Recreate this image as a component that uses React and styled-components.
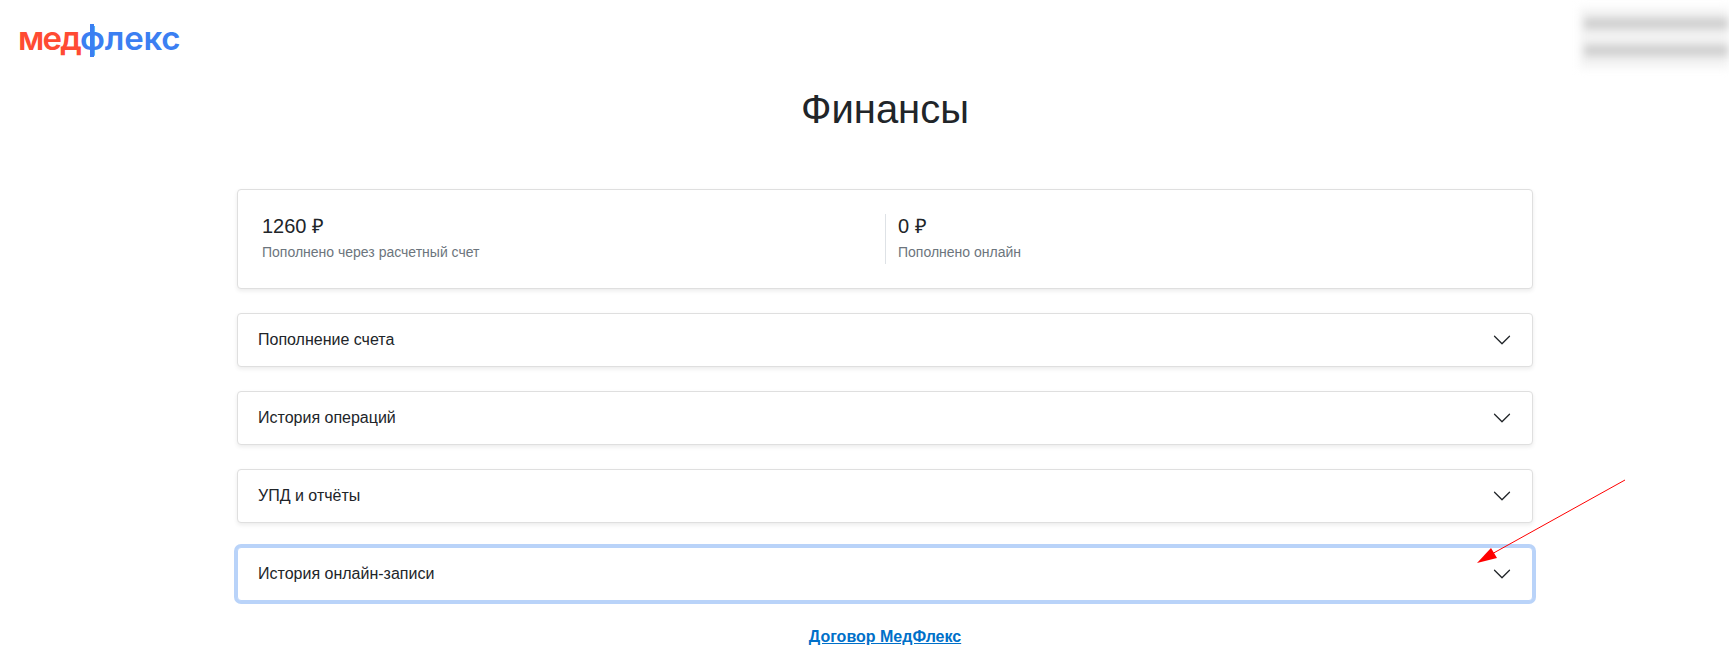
import React from 'react'
import styled, { createGlobalStyle } from 'styled-components'

const sections = [
  { title: 'Пополнение счета' },
  { title: 'История операций' },
  { title: 'УПД и отчёты' },
  { title: 'История онлайн-записи', focused: true },
]

const App = () => (
  <Page>
    <GlobalStyle />
    <Header>
      <Logo>
        <LogoPart $color="#ff4b33" $spacing="-1.8px">мед</LogoPart>
        <LogoPart $color="#3b7ff2" $spacing="-0.2px">
          <LogoStem>ф</LogoStem>лекс
        </LogoPart>
      </Logo>
      <Profile>
        <BlurBar />
        <BlurBar />
      </Profile>
    </Header>
    <Main>
      <Title>Финансы</Title>
      <StatsCard>
        <Stat>
          <Amount>1260 ₽</Amount>
          <StatLabel>Пополнено через расчетный счет</StatLabel>
        </Stat>
        <Stat $divided>
          <Amount>0 ₽</Amount>
          <StatLabel>Пополнено онлайн</StatLabel>
        </Stat>
      </StatsCard>
      <Sections>
        {sections.map(section => (
          <Section key={section.title} $focused={section.focused}>
            {section.title}
            <Chevron viewBox="0 0 16 16" fill="#212529">
              <path
                fillRule="evenodd"
                d="M1.646 4.646a.5.5 0 0 1 .708 0L8 10.293l5.646-5.647a.5.5 0 0 1 .708.708l-6 6a.5.5 0 0 1-.708 0l-6-6a.5.5 0 0 1 0-.708z"
              />
            </Chevron>
          </Section>
        ))}
      </Sections>
      <ContractLink href="#">Договор МедФлекс</ContractLink>
    </Main>
    <Annotation viewBox="0 0 1729 654">
      <line x1="1625" y1="480" x2="1490" y2="555" stroke="#ff0000" strokeWidth="1" />
      <polygon points="1477,563 1491,548 1497,558" fill="#ff0000" />
    </Annotation>
  </Page>
)

const GlobalStyle = createGlobalStyle`
  html, body {
    margin: 0;
    background: #fff;
    overflow: hidden;
  }
  body {
    font-family: "Liberation Sans", Arial, sans-serif;
    font-size: 16px;
    line-height: 24px;
    color: #212529;
  }
`

const Page = styled.div`
  position: relative;
  width: 1729px;
  height: 654px;
  overflow: hidden;
`

const Header = styled.header`
  display: flex;
  justify-content: space-between;
  height: 68px;
`

const Logo = styled.div`
  display: flex;
  align-items: baseline;
  margin: 18px 0 0 18px;
  height: 40px;
  font-family: Inter, sans-serif;
  font-size: 33px;
  line-height: 40px;
  font-weight: 600;
`

const LogoPart = styled.span`
  color: ${props => props.$color};
  letter-spacing: ${props => props.$spacing};
`

const LogoStem = styled.span`
  position: relative;
  &::after {
    content: '';
    position: absolute;
    left: 50%;
    top: 6px;
    bottom: 1px;
    width: 4px;
    margin-left: -2px;
    background: currentColor;
  }
`

const Profile = styled.div`
  display: flex;
  flex-direction: column;
  gap: 16px;
  width: 149px;
  height: 60px;
  margin-top: 8px;
  padding: 10px 0 0 4px;
  box-sizing: border-box;
  background: #f3f3f3;
  filter: blur(4px);
`

const BlurBar = styled.div`
  height: 11px;
  background: #cecece;
`

const Main = styled.main`
  width: 1296px;
  margin-left: 237px;
  display: flex;
  flex-direction: column;
  align-items: center;
`

const Title = styled.h1`
  margin: 16px 0 0;
  font-size: 40px;
  line-height: 50px;
  font-weight: 400;
`

const StatsCard = styled.section`
  display: grid;
  grid-template-columns: 647px 649px;
  box-sizing: border-box;
  width: 100%;
  height: 100px;
  margin-top: 55px;
  padding: 24px 0;
  background: #fff;
  border: 1px solid #dfdfdf;
  border-radius: 4px;
  box-shadow: 0 2px 4px rgba(0, 0, 0, 0.08);
`

const Stat = styled.div`
  height: 50px;
  padding-left: ${props => (props.$divided ? '12px' : '24px')};
  border-left: ${props => (props.$divided ? '1px solid #dee2e6' : 'none')};
`

const Amount = styled.div`
  font-size: 20px;
  line-height: 24px;
`

const StatLabel = styled.div`
  margin-top: 4px;
  font-size: 14px;
  line-height: 21px;
  color: #6c757d;
`

const Sections = styled.div`
  display: flex;
  flex-direction: column;
  gap: 24px;
  width: 100%;
  margin-top: 24px;
`

const Section = styled.div`
  display: flex;
  align-items: center;
  justify-content: space-between;
  box-sizing: border-box;
  height: 54px;
  padding: 0 20px;
  background: #fff;
  border: 1px solid ${props => (props.$focused ? '#b9d3f9' : '#dfdfdf')};
  border-radius: 4px;
  box-shadow: ${props =>
    props.$focused ? '0 0 0 3px #b9d3f9' : '0 2px 4px rgba(0, 0, 0, 0.08)'};
`

const Chevron = styled.svg`
  width: 20px;
  height: 20px;
  flex-shrink: 0;
`

const ContractLink = styled.a`
  margin-top: 24px;
  font-weight: 700;
  color: #0070c9;
  text-decoration: underline;
`

const Annotation = styled.svg`
  position: absolute;
  top: 0;
  left: 0;
  width: 1729px;
  height: 654px;
  pointer-events: none;
`

export default App
